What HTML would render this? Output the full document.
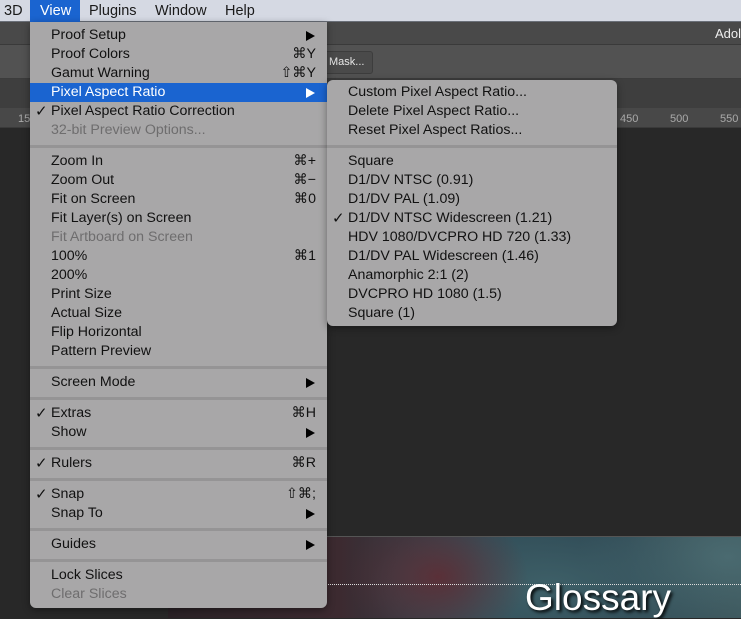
<!DOCTYPE html>
<html><head><meta charset="utf-8"><style>
*{margin:0;padding:0;box-sizing:border-box}
body{width:741px;height:618px;overflow:hidden;background:#282828;position:relative;font-family:"Liberation Sans","DejaVu Sans",sans-serif;font-size:14.2px;color:#111}
.abs{position:absolute}
.mb{left:0;top:0;width:741px;height:22px;background:#d5d9e3;border-bottom:1px solid #6a6f78}
.mb span{position:absolute;top:3px;font-size:14.5px;color:#1a1a1a}
.menu{background:#a8a7a8;border-radius:0 0 6px 6px;box-shadow:0 2px 8px rgba(0,0,0,.4)}
.r{position:absolute;left:0;right:0;height:19px;line-height:19px}
.r .t{position:absolute;left:21px}
.r .k{position:absolute;right:11px}
.r .c{position:absolute;left:5px;font-size:15px;font-weight:bold}
.r .a{position:absolute;right:12px;top:5px;width:0;height:0;border-left:9px solid #000;border-top:5px solid transparent;border-bottom:5px solid transparent}
.dis{color:#6e6d6e}
.sep{position:absolute;left:0;right:0;height:3px;background:#959495}
.hl{background:#1a64d0;color:#fff}
.hl .a{border-left-color:#fff}
</style></head><body>
<div class="abs" style="left:0;top:22px;width:741px;height:23px;background:#494949;border-bottom:1px solid #3a3a3a"></div>
<div class="abs" style="left:715px;top:26px;color:#eee;font-size:13px">Adol</div>
<div class="abs" style="left:0;top:45px;width:741px;height:34px;background:#525252;border-bottom:1px solid #3c3c3c"></div>
<div class="abs" style="left:320px;top:51px;width:53px;height:23px;border:1px solid #3d3d3d;border-radius:3px;background:#4a4a4a;color:#e8e8e8;font-size:11px;line-height:21px;padding-left:8px">Mask...</div>
<div class="abs" style="left:0;top:79px;width:741px;height:29px;background:#3e3e3e"></div>
<div class="abs" style="left:0;top:108px;width:741px;height:20px;background:#484848;border-bottom:1px solid #3a3a3a"></div>
<div class="abs" style="left:620px;top:113px;color:#aaa;font-size:11px">450</div>
<div class="abs" style="left:670px;top:113px;color:#aaa;font-size:11px">500</div>
<div class="abs" style="left:720px;top:113px;color:#aaa;font-size:11px">550</div>
<div class="abs" style="left:18px;top:113px;color:#aaa;font-size:11px">15</div>
<div class="abs" style="left:168px;top:536px;width:573px;height:82px;background:radial-gradient(ellipse 90px 70px at 270px 40px,#5a3038,transparent),radial-gradient(ellipse 180px 80px at 380px 50px,#3e6068,transparent),radial-gradient(ellipse 150px 90px at 560px 20px,#4a6a70,transparent),linear-gradient(90deg,#2a2226,#3c2a30 30%,#2f4a55 55%,#2c4450 80%,#3a5358);border-top:1px solid #555"></div>
<div class="abs" style="left:168px;top:584px;width:573px;border-top:1px dotted #ddd"></div>
<div class="abs" style="left:525px;top:577px;color:#fff;font-size:37px;text-shadow:2px 2px 3px #000">Glossary</div>

<div class="abs mb">
<span style="left:4px">3D</span>
<span style="left:30px;top:0;width:50px;height:22px;background:#1a64d0"></span>
<span style="left:40px;color:#fff">View</span>
<span style="left:89px">Plugins</span>
<span style="left:155px">Window</span>
<span style="left:225px">Help</span>
</div>

<div class="abs menu" style="left:30px;top:22px;width:297px;height:586px">
<div class="r" style="top:4px"><span class="t">Proof Setup</span><span class="a"></span></div>
<div class="r" style="top:23px"><span class="t">Proof Colors</span><span class="k">⌘Y</span></div>
<div class="r" style="top:42px"><span class="t">Gamut Warning</span><span class="k">⇧⌘Y</span></div>
<div class="r hl" style="top:61px"><span class="t">Pixel Aspect Ratio</span><span class="a"></span></div>
<div class="r" style="top:80px"><span class="c">✓</span><span class="t">Pixel Aspect Ratio Correction</span></div>
<div class="r dis" style="top:99px"><span class="t">32-bit Preview Options...</span></div>
<div class="sep" style="top:123px"></div>
<div class="r" style="top:130px"><span class="t">Zoom In</span><span class="k">⌘+</span></div>
<div class="r" style="top:149px"><span class="t">Zoom Out</span><span class="k">⌘−</span></div>
<div class="r" style="top:168px"><span class="t">Fit on Screen</span><span class="k">⌘0</span></div>
<div class="r" style="top:187px"><span class="t">Fit Layer(s) on Screen</span></div>
<div class="r dis" style="top:206px"><span class="t">Fit Artboard on Screen</span></div>
<div class="r" style="top:225px"><span class="t">100%</span><span class="k">⌘1</span></div>
<div class="r" style="top:244px"><span class="t">200%</span></div>
<div class="r" style="top:263px"><span class="t">Print Size</span></div>
<div class="r" style="top:282px"><span class="t">Actual Size</span></div>
<div class="r" style="top:301px"><span class="t">Flip Horizontal</span></div>
<div class="r" style="top:320px"><span class="t">Pattern Preview</span></div>
<div class="sep" style="top:344px"></div>
<div class="r" style="top:351px"><span class="t">Screen Mode</span><span class="a"></span></div>
<div class="sep" style="top:375px"></div>
<div class="r" style="top:382px"><span class="c">✓</span><span class="t">Extras</span><span class="k">⌘H</span></div>
<div class="r" style="top:401px"><span class="t">Show</span><span class="a"></span></div>
<div class="sep" style="top:425px"></div>
<div class="r" style="top:432px"><span class="c">✓</span><span class="t">Rulers</span><span class="k">⌘R</span></div>
<div class="sep" style="top:456px"></div>
<div class="r" style="top:463px"><span class="c">✓</span><span class="t">Snap</span><span class="k">⇧⌘;</span></div>
<div class="r" style="top:482px"><span class="t">Snap To</span><span class="a"></span></div>
<div class="sep" style="top:506px"></div>
<div class="r" style="top:513px"><span class="t">Guides</span><span class="a"></span></div>
<div class="sep" style="top:537px"></div>
<div class="r" style="top:544px"><span class="t">Lock Slices</span></div>
<div class="r dis" style="top:563px"><span class="t">Clear Slices</span></div>
</div>

<div class="abs menu" style="left:327px;top:80px;width:290px;height:246px;border-radius:6px">
<div class="r" style="top:3px"><span class="t">Custom Pixel Aspect Ratio...</span></div>
<div class="r" style="top:22px"><span class="t">Delete Pixel Aspect Ratio...</span></div>
<div class="r" style="top:41px"><span class="t">Reset Pixel Aspect Ratios...</span></div>
<div class="sep" style="top:65px"></div>
<div class="r" style="top:72px"><span class="t">Square</span></div>
<div class="r" style="top:91px"><span class="t">D1/DV NTSC (0.91)</span></div>
<div class="r" style="top:110px"><span class="t">D1/DV PAL (1.09)</span></div>
<div class="r" style="top:129px"><span class="c">✓</span><span class="t">D1/DV NTSC Widescreen (1.21)</span></div>
<div class="r" style="top:148px"><span class="t">HDV 1080/DVCPRO HD 720 (1.33)</span></div>
<div class="r" style="top:167px"><span class="t">D1/DV PAL Widescreen (1.46)</span></div>
<div class="r" style="top:186px"><span class="t">Anamorphic 2:1 (2)</span></div>
<div class="r" style="top:205px"><span class="t">DVCPRO HD 1080 (1.5)</span></div>
<div class="r" style="top:224px"><span class="t">Square (1)</span></div>
</div>
</body></html>
